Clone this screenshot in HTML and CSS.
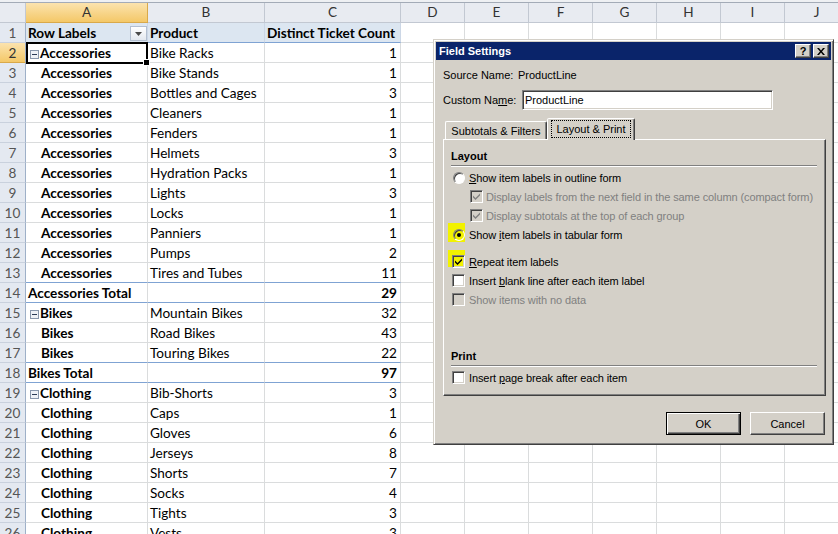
FILE: index.html
```html
<!DOCTYPE html>
<html>
<head>
<meta charset="utf-8">
<link rel="stylesheet" href="styles.css">
</head>
<body>
<div class="sheet">
  <div class="topline"></div>
  <div class="row hdr">
    <div class="c rh corner"></div>
    <div class="c ca hsel">A</div>
    <div class="c cb">B</div>
    <div class="c cc">C</div>
    <div class="c cx">D</div>
    <div class="c cx">E</div>
    <div class="c cx">F</div>
    <div class="c cx">G</div>
    <div class="c cx">H</div>
    <div class="c cx">I</div>
    <div class="c cx">J</div>
  </div>
  <div class="row r1">
    <div class="c rh">1</div>
    <div class="c ca pv">Row Labels<span class="dd"><svg width="7" height="4" viewBox="0 0 7 4"><path d="M0 0h7L3.5 4z" fill="#4a4a4a"/></svg></span></div>
    <div class="c cb pv">Product</div>
    <div class="c cc pv">Distinct Ticket Count</div>
    <div class="rest"></div>
  </div>
  <div class="row">
    <div class="c rh hsel">2</div>
    <div class="c ca first"><svg class="exp" width="9" height="9" viewBox="0 0 9 9"><rect x="0.5" y="0.5" width="8" height="8" fill="#eef1f6" stroke="#8896ab"/><path d="M2 4.5h5" stroke="#2a3a55"/></svg>Accessories<span class="selbox"><span class="handle"></span></span></div>
    <div class="c cb">Bike Racks</div>
    <div class="c cc num">1</div>
    <div class="rest"></div>
  </div>
  <div class="row"><div class="c rh">3</div><div class="c ca rep">Accessories</div><div class="c cb">Bike Stands</div><div class="c cc num">1</div><div class="rest"></div></div>
  <div class="row"><div class="c rh">4</div><div class="c ca rep">Accessories</div><div class="c cb">Bottles and Cages</div><div class="c cc num">3</div><div class="rest"></div></div>
  <div class="row"><div class="c rh">5</div><div class="c ca rep">Accessories</div><div class="c cb">Cleaners</div><div class="c cc num">1</div><div class="rest"></div></div>
  <div class="row"><div class="c rh">6</div><div class="c ca rep">Accessories</div><div class="c cb">Fenders</div><div class="c cc num">1</div><div class="rest"></div></div>
  <div class="row"><div class="c rh">7</div><div class="c ca rep">Accessories</div><div class="c cb">Helmets</div><div class="c cc num">3</div><div class="rest"></div></div>
  <div class="row"><div class="c rh">8</div><div class="c ca rep">Accessories</div><div class="c cb">Hydration Packs</div><div class="c cc num">1</div><div class="rest"></div></div>
  <div class="row"><div class="c rh">9</div><div class="c ca rep">Accessories</div><div class="c cb">Lights</div><div class="c cc num">3</div><div class="rest"></div></div>
  <div class="row"><div class="c rh">10</div><div class="c ca rep">Accessories</div><div class="c cb">Locks</div><div class="c cc num">1</div><div class="rest"></div></div>
  <div class="row"><div class="c rh">11</div><div class="c ca rep">Accessories</div><div class="c cb">Panniers</div><div class="c cc num">1</div><div class="rest"></div></div>
  <div class="row"><div class="c rh">12</div><div class="c ca rep">Accessories</div><div class="c cb">Pumps</div><div class="c cc num">2</div><div class="rest"></div></div>
  <div class="row bl"><div class="c rh">13</div><div class="c ca rep">Accessories</div><div class="c cb">Tires and Tubes</div><div class="c cc num">11</div><div class="rest"></div></div>
  <div class="row bl tot"><div class="c rh">14</div><div class="c ca">Accessories Total</div><div class="c cb"></div><div class="c cc num">29</div><div class="rest"></div></div>
  <div class="row"><div class="c rh">15</div><div class="c ca first"><svg class="exp" width="9" height="9" viewBox="0 0 9 9"><rect x="0.5" y="0.5" width="8" height="8" fill="#eef1f6" stroke="#8896ab"/><path d="M2 4.5h5" stroke="#2a3a55"/></svg>Bikes</div><div class="c cb">Mountain Bikes</div><div class="c cc num">32</div><div class="rest"></div></div>
  <div class="row"><div class="c rh">16</div><div class="c ca rep">Bikes</div><div class="c cb">Road Bikes</div><div class="c cc num">43</div><div class="rest"></div></div>
  <div class="row bl"><div class="c rh">17</div><div class="c ca rep">Bikes</div><div class="c cb">Touring Bikes</div><div class="c cc num">22</div><div class="rest"></div></div>
  <div class="row bl tot"><div class="c rh">18</div><div class="c ca">Bikes Total</div><div class="c cb"></div><div class="c cc num">97</div><div class="rest"></div></div>
  <div class="row"><div class="c rh">19</div><div class="c ca first"><svg class="exp" width="9" height="9" viewBox="0 0 9 9"><rect x="0.5" y="0.5" width="8" height="8" fill="#eef1f6" stroke="#8896ab"/><path d="M2 4.5h5" stroke="#2a3a55"/></svg>Clothing</div><div class="c cb">Bib-Shorts</div><div class="c cc num">3</div><div class="rest"></div></div>
  <div class="row"><div class="c rh">20</div><div class="c ca rep">Clothing</div><div class="c cb">Caps</div><div class="c cc num">1</div><div class="rest"></div></div>
  <div class="row"><div class="c rh">21</div><div class="c ca rep">Clothing</div><div class="c cb">Gloves</div><div class="c cc num">6</div><div class="rest"></div></div>
  <div class="row"><div class="c rh">22</div><div class="c ca rep">Clothing</div><div class="c cb">Jerseys</div><div class="c cc num">8</div><div class="rest"></div></div>
  <div class="row"><div class="c rh">23</div><div class="c ca rep">Clothing</div><div class="c cb">Shorts</div><div class="c cc num">7</div><div class="rest"></div></div>
  <div class="row"><div class="c rh">24</div><div class="c ca rep">Clothing</div><div class="c cb">Socks</div><div class="c cc num">4</div><div class="rest"></div></div>
  <div class="row"><div class="c rh">25</div><div class="c ca rep">Clothing</div><div class="c cb">Tights</div><div class="c cc num">3</div><div class="rest"></div></div>
  <div class="row"><div class="c rh">26</div><div class="c ca rep">Clothing</div><div class="c cb">Vests</div><div class="c cc num">3</div><div class="rest"></div></div>

  <div class="dlg">
    <div class="titlebar">
      <span class="ttl">Field Settings</span>
      <span class="tbtns">
        <span class="tbtn">?</span>
        <span class="tbtn"><svg width="8" height="7" viewBox="0 0 8 7"><path d="M0 0h2l2 2.5L6 0h2L5 3.5 8 7H6L4 4.5 2 7H0l3-3.5z" fill="#000"/></svg></span>
      </span>
    </div>
    <div class="frow src"><span class="lbl1">Source Name:</span><span>ProductLine</span></div>
    <div class="frow cust"><span class="lbl2">Custom Na<u>m</u>e:</span><span class="inp">ProductLine</span></div>
    <div class="tabs">
      <span class="tab">Subtotals &amp; Filters</span>
      <span class="tab active"><span class="focus">Layout &amp; Print</span></span>
    </div>
    <div class="panel">
      <div class="gtitle">Layout</div>
      <div class="sep"></div>
      <div class="opt"><span class="radio"></span><span><u>S</u>how item labels in outline form</span></div>
      <div class="opt sub dis"><span class="chk"><svg width="9" height="9" viewBox="0 0 9 9"><path d="M1 3.5l2.5 2.5L8 1.5v2L3.5 8 1 5.5z" fill="#808080"/></svg></span><span>Display labels from the next field in the same column (compact form)</span></div>
      <div class="opt sub dis"><span class="chk"><svg width="9" height="9" viewBox="0 0 9 9"><path d="M1 3.5l2.5 2.5L8 1.5v2L3.5 8 1 5.5z" fill="#808080"/></svg></span><span>Display subtotals at the top of each group</span></div>
      <div class="opt hlrow"><span class="hl hl-r"></span><span class="radio on"><span class="dot"></span></span><span>Show <u>i</u>tem labels in tabular form</span></div>
      <div class="opt gap hlrow"><span class="hl hl-c"></span><span class="chk on"><svg width="9" height="9" viewBox="0 0 9 9"><path d="M1 3.5l2.5 2.5L8 1.5v2L3.5 8 1 5.5z" fill="#000"/></svg></span><span><u>R</u>epeat item labels</span></div>
      <div class="opt"><span class="chk"></span><span>Insert <u>b</u>lank line after each item label</span></div>
      <div class="opt dis"><span class="chk"></span><span>Show items with no data</span></div>
      <div class="gtitle print">Print</div>
      <div class="sep"></div>
      <div class="opt"><span class="chk"></span><span>Insert <u>p</u>age break after each item</span></div>
    </div>
    <div class="btns">
      <span class="btn def">OK</span>
      <span class="btn">Cancel</span>
    </div>
  </div>
</div>
</body>
</html>
```
FILE: styles.css
```css
html, body { margin: 0; padding: 0; }
body {
  width: 838px;
  height: 534px;
  overflow: hidden;
  background: #fff;
}
.sheet {
  position: relative;
  width: 838px;
  height: 534px;
  overflow: hidden;
  font-family: Lato, "Liberation Sans", sans-serif;
  font-size: 13.6px;
  color: #000;
}
.topline {
  height: 2px;
  background: #eef0f3;
  border-bottom: 1px solid #a3abb7;
}
.row {
  display: flex;
  height: 20px;
  width: 900px;
}
.c {
  box-sizing: border-box;
  height: 20px;
  flex: none;
  border-right: 1px solid #dadcdd;
  border-bottom: 1px solid #dadcdd;
  padding: 0 2px;
  line-height: 20px;
  white-space: nowrap;
  position: relative;
}
.rest {
  flex: none;
  width: 500px;
  height: 20px;
  box-sizing: border-box;
  border-bottom: 1px solid #dadcdd;
  background-image: repeating-linear-gradient(to right, transparent 0, transparent 63px, #dadcdd 63px, #dadcdd 64px);
}
.rh {
  width: 26px;
  padding: 0;
  text-align: center;
  background: #e4e9f1;
  color: #555;
  border-right-color: #9eb0c8;
  border-bottom-color: #c9d1dd;
}
.ca { width: 122px; }
.cb { width: 117px; }
.cc { width: 136px; }
.cx { width: 64px; }
.num { text-align: right; padding-right: 3px; }

.hdr .c {
  background: #e8ebf1;
  text-align: center;
  color: #333;
  line-height: 19px;
  border-right-color: #c2c8d2;
  border-bottom-color: #c2c8d2;
}
.hdr .rh { border-right-color: #c2c8d2; }
.c.hsel, .hdr .c.hsel {
  background: linear-gradient(#fbe3ae, #f4c868);
  color: #333;
  border-bottom-color: #d9a94a;
}
.hdr .c.hsel { border-right-color: #d9a94a; }

.r1 .pv {
  background: #dce6f1;
  font-weight: bold;
  border-bottom-color: #7fa3d3;
  border-right-color: #ccd7e6;
}
.dd {
  position: absolute;
  left: 104px;
  top: 3px;
  width: 15px;
  height: 13px;
  border: 1px solid #b3bfd0;
  background: linear-gradient(#ffffff, #e3e8ef);
  display: flex;
  align-items: center;
  justify-content: center;
}

.first, .rep, .tot .ca { font-weight: bold; }
.tot .num { font-weight: bold; }
.first { padding-left: 4px; }
.rep { padding-left: 15px; }
.exp { vertical-align: -1px; margin-right: 1px; }
.bl .ca, .bl .cb, .bl .cc { border-bottom-color: #7fa3d3; }

.selbox {
  position: absolute;
  left: 0;
  top: -1px;
  width: 122px;
  height: 22px;
  box-sizing: border-box;
  border: 2px solid #000;
  z-index: 3;
}
.handle {
  position: absolute;
  right: -4px;
  bottom: -4px;
  width: 5px;
  height: 5px;
  background: #000;
  border: 1px solid #fff;
}

/* dialog */
.dlg {
  position: absolute;
  left: 433px;
  top: 39px;
  width: 401px;
  height: 406px;
  box-sizing: border-box;
  background: #d4d0c8;
  border: 1px solid;
  border-color: #d4d0c8 #404040 #404040 #d4d0c8;
  box-shadow: inset 1px 1px #fff, inset -1px -1px #808080;
  padding: 2px;
  font-family: "Liberation Sans", Arial, sans-serif;
  font-size: 11px;
  color: #000;
  z-index: 10;
  white-space: nowrap;
}
.titlebar {
  height: 18px;
  background: #0a246a;
  display: flex;
  align-items: center;
  justify-content: space-between;
  padding: 0 2px 0 3px;
}
.ttl { color: #fff; font-weight: bold; font-size: 11px; }
.tbtns { display: flex; gap: 2px; }
.tbtn {
  width: 16px;
  height: 14px;
  box-sizing: border-box;
  background: #d4d0c8;
  border: 1px solid;
  border-color: #fff #404040 #404040 #fff;
  box-shadow: inset -1px -1px #808080;
  display: flex;
  align-items: center;
  justify-content: center;
  font-weight: bold;
  font-size: 11px;
  line-height: 12px;
}
.frow {
  display: flex;
  align-items: center;
  height: 20px;
  padding-left: 7px;
}
.src { margin-top: 5px; }
.cust { margin-top: 5px; }
.lbl1 { width: 75px; }
.lbl2 { width: 79px; }
.inp {
  width: 251px;
  height: 20px;
  box-sizing: border-box;
  background: #fff;
  border: 1px solid;
  border-color: #808080 #fff #fff #808080;
  box-shadow: inset 1px 1px #404040, inset -1px -1px #d4d0c8;
  padding: 0 2px;
  line-height: 18px;
}
.tabs {
  display: flex;
  align-items: flex-end;
  height: 21px;
  margin-top: 8px;
  margin-left: 9px;
  position: relative;
  z-index: 2;
}
.tab {
  box-sizing: border-box;
  height: 18px;
  width: 102px;
  border: 1px solid;
  border-bottom: none;
  border-color: #fff #404040 transparent #fff;
  box-shadow: inset -1px 0 #808080;
  border-radius: 2px 2px 0 0;
  display: flex;
  align-items: center;
  justify-content: center;
}
.tab.active {
  height: 22px;
  width: 88px;
  margin-bottom: -1px;
  background: #d4d0c8;
  padding-bottom: 2px;
}
.focus {
  outline: 1px dotted #000;
  outline-offset: 1px;
  padding: 1px 3px;
}
.panel {
  box-sizing: border-box;
  margin-left: 7px;
  width: 383px;
  height: 257px;
  border: 1px solid;
  border-color: #fff #404040 #404040 #fff;
  box-shadow: inset -1px -1px #808080;
  padding: 8px 7px 0 7px;
  letter-spacing: -0.1px;
}
.gtitle {
  font-weight: bold;
  height: 16px;
  line-height: 16px;
  letter-spacing: 0;
}
.gtitle.print { margin-top: 39px; }
.sep {
  margin-top: 1px;
  border-top: 1px solid #808080;
  border-bottom: 1px solid #fff;
  width: 366px;
}
.opt {
  display: flex;
  align-items: center;
  height: 19px;
  position: relative;
}
.sep + .opt { margin-top: 1px; }
.opt.gap { margin-top: 8px; }
.opt.sub { padding-left: 19px; }
.opt.dis { color: #808080; }
.radio {
  box-sizing: border-box;
  width: 12px;
  height: 12px;
  border-radius: 50%;
  border: 1px solid;
  border-color: #808080 #fff #fff #808080;
  box-shadow: inset 1px 1px #404040;
  background: #fff;
  margin-left: 2px;
  margin-right: 4px;
  display: flex;
  align-items: center;
  justify-content: center;
  position: relative;
  z-index: 1;
  flex: none;
}
.dot {
  width: 4px;
  height: 4px;
  border-radius: 50%;
  background: #000;
}
.chk {
  box-sizing: border-box;
  width: 13px;
  height: 13px;
  border: 1px solid;
  border-color: #808080 #fff #fff #808080;
  box-shadow: inset 1px 1px #404040, inset -1px -1px #d4d0c8;
  background: #fff;
  margin-left: 1px;
  margin-right: 4px;
  display: flex;
  align-items: center;
  justify-content: center;
  position: relative;
  z-index: 1;
  flex: none;
}
.sub .chk { margin-left: 0; margin-right: 3px; }
.dis .chk { background: #d4d0c8; }
.hlrow .radio, .hlrow .chk { background: #f2f200; }
.hl {
  position: absolute;
  background: #f2f200;
  z-index: 0;
}
.hl-r { left: -3px; top: -2px; width: 17px; height: 19px; }
.hl-c { left: -3px; top: -2px; width: 17px; height: 17px; }
.btns {
  display: flex;
  justify-content: flex-end;
  gap: 9px;
  margin-top: 16px;
  padding-right: 6px;
}
.btn {
  box-sizing: border-box;
  width: 75px;
  height: 23px;
  background: #d4d0c8;
  border: 1px solid;
  border-color: #fff #404040 #404040 #fff;
  box-shadow: inset -1px -1px #808080;
  display: flex;
  align-items: center;
  justify-content: center;
}
.btn.def {
  border: 1px solid #000;
  box-shadow: inset 1px 1px #fff, inset -1px -1px #404040, inset -2px -2px #808080;
}
```
